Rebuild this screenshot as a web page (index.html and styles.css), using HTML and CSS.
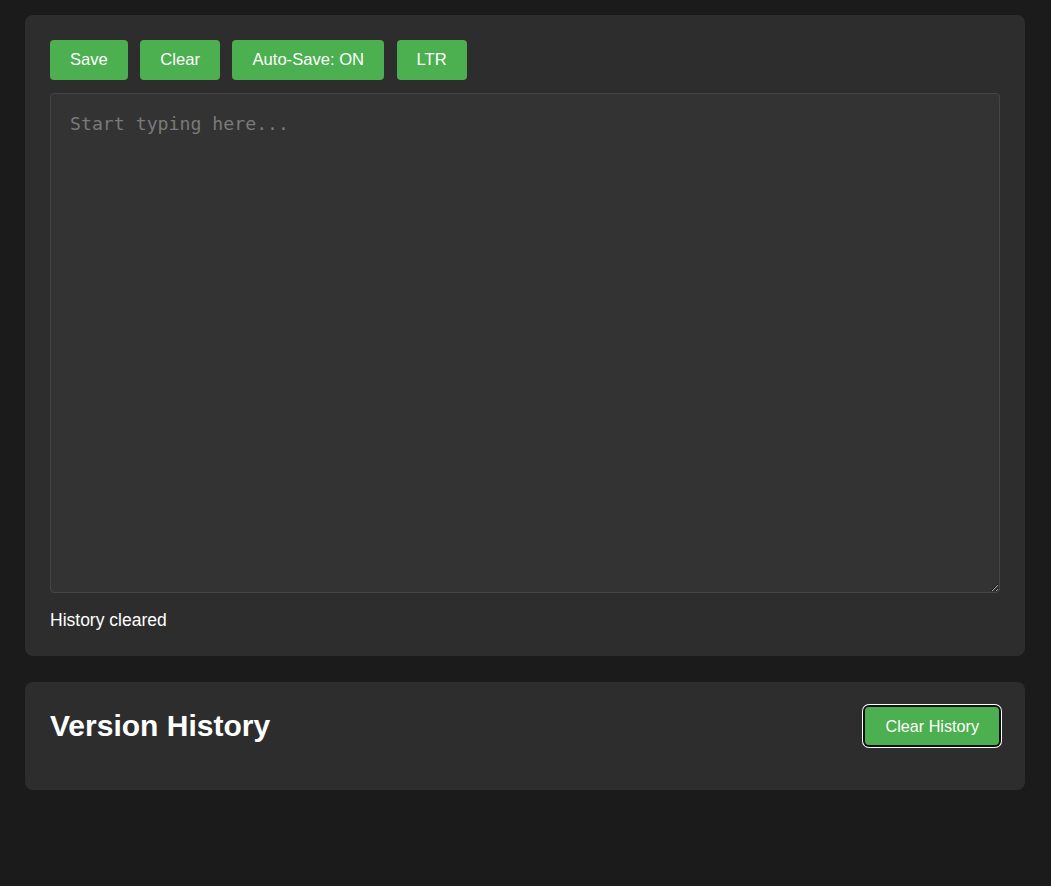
FILE: index.html
```html
<!DOCTYPE html>
<html lang="en">
<head>
<meta charset="utf-8">
<title>Editor</title>
<link rel="stylesheet" href="styles.css">
</head>
<body>
<div class="container">
  <section class="card editor-card">
    <div class="toolbar">
      <button class="btn">Save</button>
      <button class="btn">Clear</button>
      <button class="btn">Auto-Save: ON</button>
      <button class="btn">LTR</button>
    </div>
    <textarea class="editor" placeholder="Start typing here..."></textarea>
    <div class="status">History cleared</div>
  </section>
  <section class="card history-card">
    <div class="history-header">
      <h2 class="history-title">Version History</h2>
      <button class="btn btn-focus">Clear History</button>
    </div>
    <div class="history-list"></div>
  </section>
</div>
</body>
</html>
```
FILE: styles.css
```css
html, body {
  margin: 0;
  background: #1b1b1b;
}
body {
  padding: 15px 26px 15px 25px;
  font-family: "Liberation Sans", Arial, sans-serif;
  color: #ffffff;
}
.container {
  width: 1000px;
}
.card {
  background: #2d2d2d;
  border-radius: 8px;
  padding: 25px;
}
.editor-card {
  margin-bottom: 26px;
}
.toolbar {
  display: flex;
  gap: 12.5px;
  margin-bottom: 13px;
}
.btn {
  background: #4caf50;
  color: #ffffff;
  border: none;
  border-radius: 4px;
  padding: 11px 20px;
  font-family: "Liberation Sans", Arial, sans-serif;
  font-size: 16.6px;
  line-height: 18px;
  cursor: pointer;
}
.editor {
  display: block;
  box-sizing: border-box;
  width: 100%;
  height: 500px;
  background: #333333;
  border: 1px solid #454545;
  border-radius: 4px;
  padding: 18px 19px 14px;
  color: #eeeeee;
  font-family: "DejaVu Sans Mono", monospace;
  font-size: 18.2px;
  line-height: 1.35;
  resize: vertical;
  outline: none;
}
.editor::placeholder {
  color: #7a7a7a;
}
.status {
  margin-top: 16px;
  font-size: 17.5px;
  line-height: 22px;
}
.history-header {
  display: flex;
  justify-content: space-between;
  align-items: center;
  margin-bottom: 20px;
}
.history-title {
  margin: 0;
  font-size: 30px;
  font-weight: bold;
}
.btn-focus {
  padding: 10px 20px;
  font-size: 16.2px;
  margin-right: 1px;
  box-shadow: 0 0 0 2px #101010, 0 0 0 3px #ffffff;
  border-radius: 4px;
}
```
